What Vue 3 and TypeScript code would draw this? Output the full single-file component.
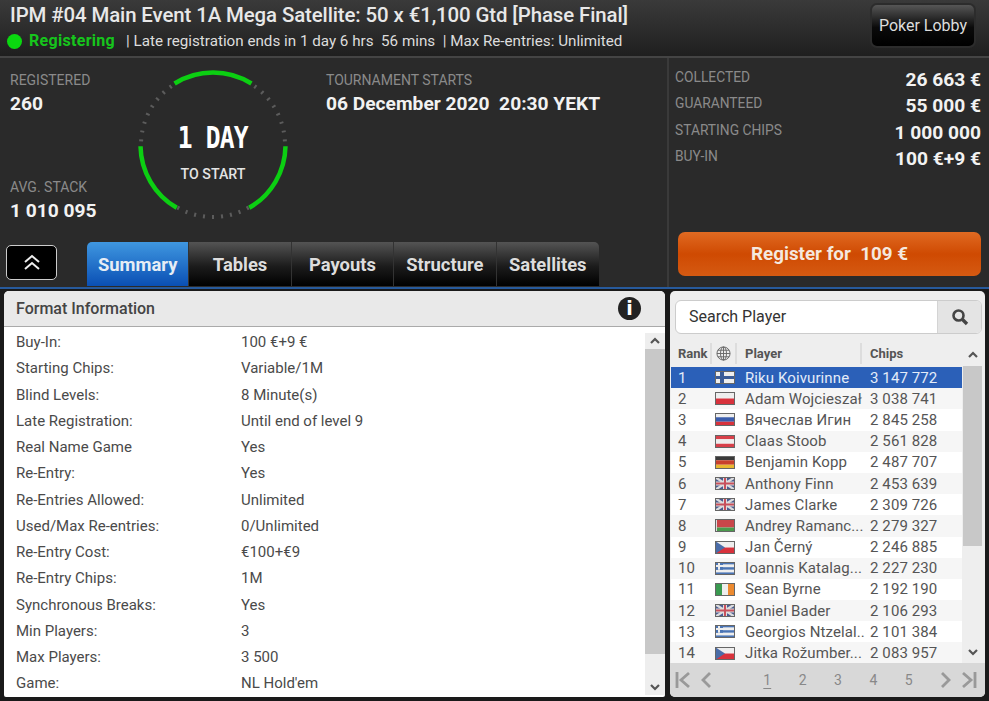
<script setup lang="ts">
interface Shape { d: string; fill: string }

const formatRows: [string, string][] = [
  ['Buy-In:', '100 €+9 €'],
  ['Starting Chips:', 'Variable/1M'],
  ['Blind Levels:', '8 Minute(s)'],
  ['Late Registration:', 'Until end of level 9'],
  ['Real Name Game', 'Yes'],
  ['Re-Entry:', 'Yes'],
  ['Re-Entries Allowed:', 'Unlimited'],
  ['Used/Max Re-entries:', '0/Unlimited'],
  ['Re-Entry Cost:', '€100+€9'],
  ['Re-Entry Chips:', '1M'],
  ['Synchronous Breaks:', 'Yes'],
  ['Min Players:', '3'],
  ['Max Players:', '3 500'],
  ['Game:', "NL Hold'em"],
]

const prizeRows = [
  ['COLLECTED', '26 663 €'],
  ['GUARANTEED', '55 000 €'],
  ['STARTING CHIPS', '1 000 000'],
  ['BUY-IN', '100 €+9 €'],
]

const tabs = ['Summary', 'Tables', 'Payouts', 'Structure', 'Satellites']

const bands = (...colors: string[]): Shape[] =>
  colors.map((fill, i) => {
    const h = 13 / colors.length
    return { d: `M0 ${i * h}H20V${(i + 1) * h}H0Z`, fill }
  })

const uk: Shape[] = [
  { d: 'M0 0H20V13H0Z', fill: '#4a5a90' },
  { d: 'M0 0L2 0L20 11.5V13H18L0 1.5Z', fill: '#ddd' },
  { d: 'M20 0H18L0 11.5V13H2L20 1.5Z', fill: '#ddd' },
  { d: 'M8 0H12V4.5H20V8.5H12V13H8V8.5H0V4.5H8Z', fill: '#ddd' },
  { d: 'M9 0H11V5.5H20V7.5H11V13H9V7.5H0V5.5H9Z', fill: '#c8505c' },
]
const czech: Shape[] = [
  ...bands('#eee', '#d8323c'),
  { d: 'M0 0L10 6.5L0 13Z', fill: '#4a6ca8' },
]
const flags: Record<string, Shape[]> = {
  fi: [
    { d: 'M0 0H20V13H0Z', fill: '#eee' },
    { d: 'M5 0H9V5H20V8H9V13H5V8H0V5H5Z', fill: '#3a5c98' },
  ],
  pl: bands('#eee', '#d8323c'),
  ru: bands('#eee', '#3a5cab', '#d8323c'),
  at: bands('#d8404a', '#eee', '#d8404a'),
  de: bands('#3a3a3a', '#c9402c', '#e8b830'),
  uk,
  by: [
    { d: 'M0 0H20V8.5H0Z', fill: '#c9464a' },
    { d: 'M0 8.5H20V13H0Z', fill: '#4a9a4c' },
    { d: 'M0 0H2V13H0Z', fill: '#ddd' },
  ],
  cz: czech,
  gr: [
    ...bands('#4a74b4', '#eee', '#4a74b4', '#eee', '#4a74b4'),
    { d: 'M0 0H8V7.8H0Z', fill: '#4a74b4' },
    { d: 'M3 0H5V7.8H3ZM0 3H8V5H0Z', fill: '#eee' },
  ],
  ie: [
    { d: 'M0 0H7V13H0Z', fill: '#3a9a50' },
    { d: 'M7 0H13V13H7Z', fill: '#eee' },
    { d: 'M13 0H20V13H13Z', fill: '#ec8a30' },
  ],
}

const players = [
  ['Riku Koivurinne', 'fi', '3 147 772'],
  ['Adam Wojcieszał', 'pl', '3 038 741'],
  ['Вячеслав Игин', 'ru', '2 845 258'],
  ['Claas Stoob', 'at', '2 561 828'],
  ['Benjamin Kopp', 'de', '2 487 707'],
  ['Anthony Finn', 'uk', '2 453 639'],
  ['James Clarke', 'uk', '2 309 726'],
  ['Andrey Ramanc...', 'by', '2 279 327'],
  ['Jan Černý', 'cz', '2 246 885'],
  ['Ioannis Katalag...', 'gr', '2 227 230'],
  ['Sean Byrne', 'ie', '2 192 190'],
  ['Daniel Bader', 'uk', '2 106 293'],
  ['Georgios Ntzelal..', 'gr', '2 101 384'],
  ['Jitka Rožumber...', 'cz', '2 083 957'],
]

// grey ticks sit in the gaps of the countdown ring
const polar = (deg: number, r: number) => {
  const a = (deg * Math.PI) / 180
  return { x: 76 + r * Math.sin(a), y: 76 - r * Math.cos(a) }
}
const ticks: { x1: number; y1: number; x2: number; y2: number }[] = []
for (let deg = -180; deg < 180; deg += 7.2) {
  const abs = Math.abs(deg)
  if ((abs > 34 && abs < 89) || abs > 151) {
    const a = polar(deg, 74)
    const b = polar(deg, 70)
    ticks.push({ x1: a.x, y1: a.y, x2: b.x, y2: b.y })
  }
}
const arc = (from: number, to: number) => {
  const a = polar(from, 72.5)
  const b = polar(to, 72.5)
  return `M${a.x} ${a.y}A72.5 72.5 0 0 1 ${b.x} ${b.y}`
}
</script>

<template>
  <div class="screen">
    <header class="topbar">
      <div class="topbar-text">
        <h1>IPM #04 Main Event 1A Mega Satellite: 50 x €1,100 Gtd [Phase Final]</h1>
        <p class="status">
          <span class="dot"></span>
          <strong>Registering</strong>
          <span>| Late registration ends in 1 day 6 hrs&nbsp; 56 mins&nbsp; | Max Re-entries: Unlimited</span>
        </p>
      </div>
      <button class="lobby-btn">Poker Lobby</button>
    </header>

    <section class="overview">
      <div class="overview-left">
        <div class="overview-top">
          <div class="stats-col">
            <div>
              <div class="label">REGISTERED</div>
              <div class="value">260</div>
            </div>
            <div>
              <div class="label">AVG. STACK</div>
              <div class="value">1 010 095</div>
            </div>
          </div>
          <div class="ring">
            <svg width="152" height="152" viewBox="0 0 152 152" class="ring-svg">
              <line v-for="(t, i) in ticks" :key="i" :x1="t.x1" :y1="t.y1" :x2="t.x2" :y2="t.y2" stroke="#5c5c5c" stroke-width="2" />
              <path v-for="d in [arc(-32, 32), arc(91, 150), arc(-150, -91)]" :key="d" :d="d" fill="none" stroke="#0ccf12" stroke-width="4.5" />
            </svg>
            <div class="ring-big">1 DAY</div>
            <div class="ring-small">TO START</div>
          </div>
          <div class="starts-col">
            <div class="label">TOURNAMENT STARTS</div>
            <div class="value">06 December 2020&nbsp; 20:30 YEKT</div>
          </div>
        </div>
        <div class="tab-row">
          <button class="collapse-btn" aria-label="Collapse">
            <svg width="18" height="17" viewBox="0 0 18 17" fill="none" stroke="#eee" stroke-width="2">
              <path d="M2 8L9 2L16 8M2 15L9 9L16 15" />
            </svg>
          </button>
          <nav class="tabs">
            <button v-for="(tab, i) in tabs" :key="tab" class="tab" :class="{ active: i === 0 }">{{ tab }}</button>
          </nav>
        </div>
      </div>
      <div class="overview-right">
        <div class="prizes">
          <div v-for="row in prizeRows" :key="row[0]" class="prize-row">
            <span class="label">{{ row[0] }}</span>
            <span class="value">{{ row[1] }}</span>
          </div>
        </div>
        <button class="register-btn">Register for&nbsp; 109 €</button>
      </div>
    </section>

    <main class="content">
      <section class="format-panel">
        <div class="panel-head">
          <span>Format Information</span>
          <span class="info-icon">i</span>
        </div>
        <div class="format-body">
          <div class="format-rows">
            <div v-for="row in formatRows" :key="row[0]" class="format-row">
              <span class="format-key">{{ row[0] }}</span>
              <span>{{ row[1] }}</span>
            </div>
          </div>
          <div class="scrollbar format-scroll">
            <svg class="arrow" width="12" height="8" viewBox="0 0 12 8"><path d="M2 6L6 2L10 6" fill="none" stroke="#555" stroke-width="2.2" /></svg>
            <div class="thumb"></div>
            <div class="track-rest"></div>
            <svg class="arrow" width="12" height="8" viewBox="0 0 12 8"><path d="M2 2L6 6L10 2" fill="none" stroke="#555" stroke-width="2.2" /></svg>
          </div>
        </div>
      </section>

      <section class="players-panel">
        <div class="search">
          <span class="search-text">Search Player</span>
          <span class="search-btn">
            <svg width="18" height="18" viewBox="0 0 18 18" fill="none" stroke="#444">
              <circle cx="7.5" cy="7.5" r="5" stroke-width="2.6" />
              <path d="M11.5 11.5L16 16" stroke-width="3.4" />
            </svg>
          </span>
        </div>
        <div class="players-body">
          <div class="players-table">
            <div class="table-head">
              <span class="col-rank">Rank</span>
              <span class="col-flag">
                <svg width="15" height="15" viewBox="0 0 16 16" fill="none" stroke="#666">
                  <circle cx="8" cy="8" r="7" />
                  <ellipse cx="8" cy="8" rx="3.2" ry="7" />
                  <path d="M1 8H15M2 4.5H14M2 11.5H14M8 1V15" />
                </svg>
              </span>
              <span class="col-name">Player</span>
              <span class="col-chips">Chips</span>
            </div>
            <div v-for="(p, i) in players" :key="i" class="player-row" :class="{ selected: i === 0, odd: i % 2 === 0 }">
              <span class="col-rank">{{ i + 1 }}</span>
              <span class="col-flag">
                <svg class="flag" width="20" height="13" viewBox="0 0 20 13">
                  <path v-for="(s, n) in flags[p[1]]" :key="n" :d="s.d" :fill="s.fill" />
                  <rect x="0.5" y="0.5" width="19" height="12" fill="none" stroke="#666" />
                </svg>
              </span>
              <span class="col-name">{{ p[0] }}</span>
              <span class="col-chips">{{ p[2] }}</span>
            </div>
          </div>
          <div class="scrollbar players-scroll">
            <svg class="arrow" width="12" height="8" viewBox="0 0 12 8"><path d="M2 6L6 2L10 6" fill="none" stroke="#555" stroke-width="2.2" /></svg>
            <div class="thumb"></div>
            <div class="track-rest"></div>
            <svg class="arrow" width="12" height="8" viewBox="0 0 12 8"><path d="M2 2L6 6L10 2" fill="none" stroke="#555" stroke-width="2.2" /></svg>
          </div>
        </div>
        <div class="pager">
          <svg width="16" height="18" viewBox="0 0 16 18" fill="none" stroke="#999" stroke-width="2.8"><path d="M2 1V17M14 2L6 9L14 16" /></svg>
          <svg class="pager-prev" width="11" height="18" viewBox="0 0 11 18" fill="none" stroke="#999" stroke-width="2.8"><path d="M9 2L2 9L9 16" /></svg>
          <div class="pages">
            <span class="current">1</span><span>2</span><span>3</span><span>4</span><span>5</span>
          </div>
          <svg class="pager-next" width="11" height="18" viewBox="0 0 11 18" fill="none" stroke="#999" stroke-width="2.8"><path d="M2 2L9 9L2 16" /></svg>
          <svg width="16" height="18" viewBox="0 0 16 18" fill="none" stroke="#999" stroke-width="2.8"><path d="M14 1V17M2 2L10 9L2 16" /></svg>
        </div>
      </section>
    </main>
  </div>
</template>

<style>
html,
body {
  margin: 0;
  background: #1a1a1a;
}
</style>

<style scoped>
.screen {
  width: 989px;
  height: 701px;
  overflow: hidden;
  display: flex;
  flex-direction: column;
  background: #1a1a1a;
  font-family: Roboto, "Liberation Sans", sans-serif;
}

button {
  font-family: inherit;
  cursor: pointer;
}

/* top bar */
.topbar {
  height: 58px;
  box-sizing: border-box;
  flex: none;
  display: flex;
  justify-content: space-between;
  padding: 3px 13px 0 0;
  background: linear-gradient(#3a3a3a, #1f1f1f);
  border-bottom: 2px solid #444;
}

.topbar-text h1 {
  margin: 0 0 0 10px;
  font-size: 20.4px;
  line-height: 24px;
  font-weight: 500;
  color: #e8e8e8;
  white-space: nowrap;
  letter-spacing: -0.1px;
}

.status {
  margin: 3px 0 0 7px;
  display: flex;
  align-items: center;
  font-size: 15.2px;
  line-height: 22px;
  color: #ddd;
  white-space: nowrap;
}

.dot {
  width: 15px;
  height: 15px;
  border-radius: 50%;
  background: #0ad80f;
  margin-right: 7px;
}

.status strong {
  color: #16c51c;
  font-size: 16px;
  font-weight: 700;
  letter-spacing: 0.3px;
  margin-right: 11px;
}

.lobby-btn {
  width: 106px;
  height: 45px;
  border: 2px solid #2c2c2c;
  border-radius: 7px;
  background: linear-gradient(#565656, #0a0a0a 55%, #000);
  color: #ddd;
  font-size: 16px;
  padding: 0;
}

/* overview */
.overview {
  height: 231px;
  flex: none;
  display: flex;
  background: #2a2a2a;
  border-bottom: 2px solid #275a9c;
  box-sizing: border-box;
}

.overview-left {
  width: 667px;
  flex: none;
  display: flex;
  flex-direction: column;
  border-right: 2px solid #3a3a3a;
  box-sizing: content-box;
}

.overview-top {
  display: flex;
  height: 184px;
}

.label {
  font-size: 14px;
  line-height: 16px;
  color: #8a8a8a;
}

.value {
  font-size: 19.2px;
  line-height: 22px;
  font-weight: 700;
  color: #f2f2f2;
  margin-top: 5px;
  white-space: nowrap;
}

.stats-col {
  width: 137px;
  box-sizing: border-box;
  padding: 14px 0 20px 10px;
  display: flex;
  flex-direction: column;
  justify-content: space-between;
}

.ring {
  position: relative;
  width: 152px;
  height: 152px;
  margin-top: 11px;
  flex: none;
  display: flex;
  flex-direction: column;
  align-items: center;
}

.ring-svg {
  position: absolute;
  inset: 0;
}

.ring-big {
  margin-top: 52px;
  font-family: "DejaVu Sans Mono", monospace;
  font-size: 30px;
  font-weight: 700;
  line-height: 34px;
  color: #fff;
  transform: scaleX(0.82);
  white-space: nowrap;
  letter-spacing: -1px;
}

.ring-small {
  margin-top: 11px;
  font-size: 14.2px;
  line-height: 16px;
  font-weight: 500;
  color: #e4e4e4;
}

.starts-col {
  padding: 14px 0 0 37px;
}

.tab-row {
  display: flex;
  align-items: flex-end;
  padding-left: 6px;
}

.collapse-btn {
  width: 51px;
  height: 35px;
  margin-bottom: 6px;
  background: #000;
  border: 1px solid #ccc;
  border-radius: 5px;
  display: flex;
  align-items: center;
  justify-content: center;
  padding: 0;
}

.tabs {
  display: flex;
  margin-left: 30px;
  height: 44px;
}

.tab {
  width: 102.4px;
  height: 44px;
  padding: 0;
  border: 0;
  border-right: 1px solid #333;
  background: linear-gradient(#545454, #1c1c1c 55%, #000);
  color: #ddd;
  font-size: 18.4px;
  font-weight: 700;
}

.tab:last-child {
  border-right: 0;
  border-top-right-radius: 5px;
}

.tab.active {
  background: linear-gradient(#3f97e0, #0a4fb4);
  color: #e6edf5;
  border-top-left-radius: 5px;
}

.overview-right {
  flex: 1;
  padding: 0 8px 11px 6px;
  display: flex;
  flex-direction: column;
  justify-content: space-between;
}

.prizes {
  padding-top: 11px;
}

.prize-row {
  display: flex;
  justify-content: space-between;
  height: 26.3px;
}

.prize-row .label {
  font-size: 13.8px;
  line-height: 15px;
  margin-top: 1px;
}

.prize-row .value {
  margin-top: 0;
}

.register-btn {
  align-self: flex-end;
  width: 303px;
  height: 44px;
  border: 0;
  border-radius: 7px;
  background: linear-gradient(#e06a22, #cf4a02 50%, #d55a12);
  color: #f5e8df;
  font-size: 18.8px;
  font-weight: 700;
  padding: 0;
}

/* lower panels */
.content {
  display: flex;
  gap: 5px;
  padding: 2px 4px 0;
  height: 408px;
  flex: none;
}

.format-panel {
  width: 661px;
  height: 406px;
  flex: none;
  background: #fff;
  border-radius: 5px 5px 2px 2px;
  overflow: hidden;
  display: flex;
  flex-direction: column;
}

.panel-head {
  height: 36px;
  flex: none;
  box-sizing: border-box;
  display: flex;
  align-items: center;
  justify-content: space-between;
  padding: 0 24px 0 12px;
  background: #e9e9e9;
  border-bottom: 1px solid #aaa;
  font-size: 16px;
  font-weight: 500;
  color: #444;
}

.info-icon {
  width: 23px;
  height: 23px;
  border-radius: 50%;
  background: #222;
  color: #fff;
  font-size: 19px;
  line-height: 23px;
  font-weight: 900;
  text-align: center;
  font-family: "DejaVu Sans", sans-serif;
}

.format-body {
  flex: 1;
  display: flex;
  min-height: 0;
  padding-top: 6px;
}

.format-rows {
  flex: 1;
  padding-left: 12px;
  overflow: hidden;
}

.format-row {
  display: flex;
  height: 26.25px;
  font-size: 15px;
  line-height: 18px;
  color: #4a4a4a;
}

.format-key {
  width: 225px;
  flex: none;
}

.scrollbar {
  width: 20px;
  flex: none;
  display: flex;
  flex-direction: column;
  align-items: center;
  background: #eee;
}

.arrow {
  flex: none;
}

.format-scroll .arrow {
  margin: 4px 0;
}

.players-scroll .arrow {
  margin: 8px 0 7px;
}

.thumb {
  align-self: stretch;
  background: #c8c8c8;
}

.track-rest {
  flex: 1;
}

.format-scroll .thumb {
  height: 305px;
}

.format-scroll {
  margin-bottom: 2px;
}

.players-panel {
  width: 315px;
  height: 406px;
  flex: none;
  background: #eee;
  border-radius: 5px;
  overflow: hidden;
  display: flex;
  flex-direction: column;
}

.search {
  height: 34px;
  margin: 9px 3px 9px 5px;
  flex: none;
  display: flex;
  background: #fff;
  border: 1px solid #ccc;
  border-radius: 6px;
  box-sizing: border-box;
  overflow: hidden;
}

.search-text {
  flex: 1;
  padding-left: 13px;
  font-size: 16px;
  line-height: 32px;
  color: #333;
}

.search-btn {
  width: 43px;
  background: #e4e4e4;
  border-left: 1px solid #d4d4d4;
  display: flex;
  align-items: center;
  justify-content: center;
}

.players-body {
  flex: 1;
  display: flex;
  min-height: 0;
  padding: 0 3px 0 1px;
}

.players-table {
  width: 291px;
  flex: none;
  overflow: hidden;
}

.table-head,
.player-row {
  display: flex;
  align-items: center;
  white-space: nowrap;
}

.table-head {
  height: 24px;
  background: #eee;
  font-size: 13px;
  font-weight: 700;
  color: #555;
  align-items: flex-start;
  line-height: 21px;
}

.table-head > span {
  border-right: 2px solid #ddd;
  box-sizing: border-box;
  height: 21px;
}

.table-head > .col-chips {
  border-right: 0;
}

.table-head .col-flag svg {
  display: block;
  margin: 3px auto 0;
}

.player-row {
  height: 21.2px;
  background: #f6f6f6;
  font-size: 15px;
  color: #555;
  letter-spacing: 0.1px;
}

.player-row.odd {
  background: #fff;
}

.player-row.selected {
  background: #2b60b8;
  color: #e4ecf8;
}

.col-rank {
  width: 41px;
  padding-left: 7px;
  box-sizing: border-box;
  flex: none;
}

.col-flag {
  width: 25px;
  flex: none;
  display: flex;
  justify-content: center;
}

.player-row .col-flag {
  justify-content: flex-start;
  padding-left: 3px;
  box-sizing: border-box;
}

.flag {
  display: block;
}

.col-name {
  width: 125px;
  flex: none;
  padding-left: 8px;
  box-sizing: border-box;
}

.col-chips {
  padding-left: 8px;
  flex: 1;
}

.players-scroll {
  margin-left: auto;
  width: 19px;
}

.players-scroll .thumb {
  height: 180px;
}

.pager {
  height: 34px;
  flex: none;
  box-sizing: border-box;
  background: #d8d8d8;
  display: flex;
  align-items: center;
  padding: 0 8px 0 5px;
}

.pager-prev {
  margin-left: 10px;
}

.pager-next {
  margin-right: 10px;
}

.pages {
  flex: 1;
  display: flex;
  justify-content: center;
  gap: 27.5px;
  padding-left: 24px;
  box-sizing: border-box;
  font-size: 14px;
  color: #888;
}

.pages .current {
  text-decoration: underline;
  text-underline-offset: 3px;
}
</style>
